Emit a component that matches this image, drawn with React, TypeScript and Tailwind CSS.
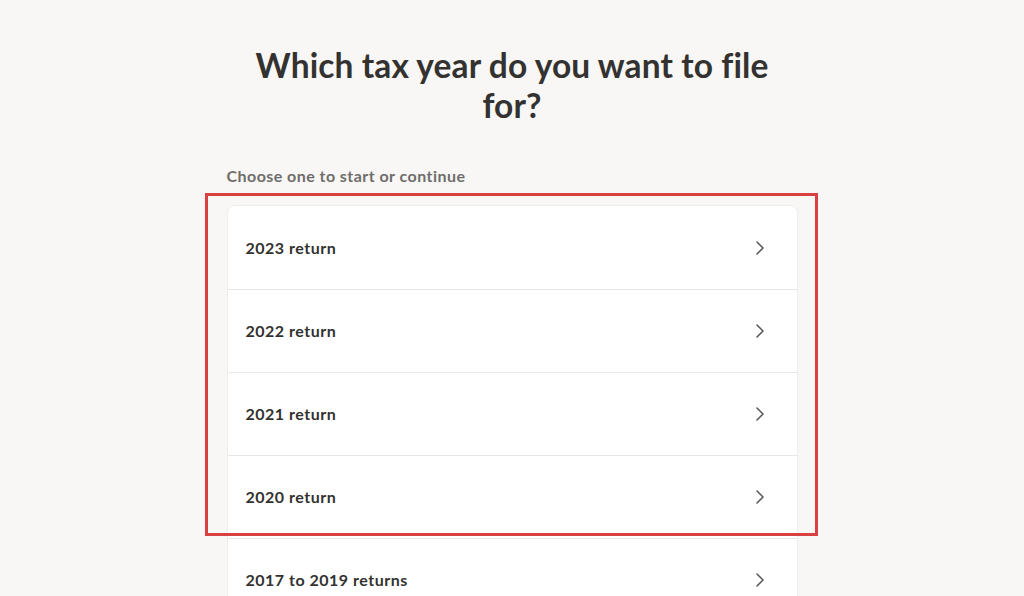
import React from "react";

const rows = ["2023 return", "2022 return", "2021 return", "2020 return", "2017 to 2019 returns"];

function Chevron() {
  return (
    <svg width="10" height="16" viewBox="0 0 10 16" fill="none" className="shrink-0">
      <path d="M2 2l6 6-6 6" stroke="#5a5a5a" strokeWidth="1.6" strokeLinecap="round" strokeLinejoin="round" />
    </svg>
  );
}

export default function App() {
  return (
    <div
      className="relative w-[1024px] h-[596px] overflow-hidden bg-[#f8f7f5] flex flex-col items-center"
      style={{ fontFamily: "Lato, 'Noto Sans', sans-serif" }}
    >
      <h1 className="mt-[45px] w-[571px] text-center text-[33.5px] leading-[40px] font-bold text-[#333230] tracking-[0.1px]">
        Which tax year do you want to file for?
      </h1>
      <div className="w-[571px] mt-[41px]">
        <p className="text-[16px] font-bold text-[#6e6d6b] leading-[20px] tracking-[0.45px]">Choose one to start or continue</p>
        <div className="mt-[19px] bg-white rounded-t-[8px] border border-[#efeeec]">
          {rows.map((r, i) => (
            <div
              key={r}
              className={`h-[83px] flex items-center justify-between pl-[18px] pr-[32px] ${i > 0 ? "border-t border-[#e8e7e5]" : ""}`}
            >
              <span className="text-[16px] font-bold text-[#333230] tracking-[0.5px]">{r}</span>
              <Chevron />
            </div>
          ))}
        </div>
      </div>
      <div className="absolute left-[205px] top-[193px] w-[613px] h-[343px] border-[3px] border-[#d8413f] pointer-events-none" />
    </div>
  );
}
